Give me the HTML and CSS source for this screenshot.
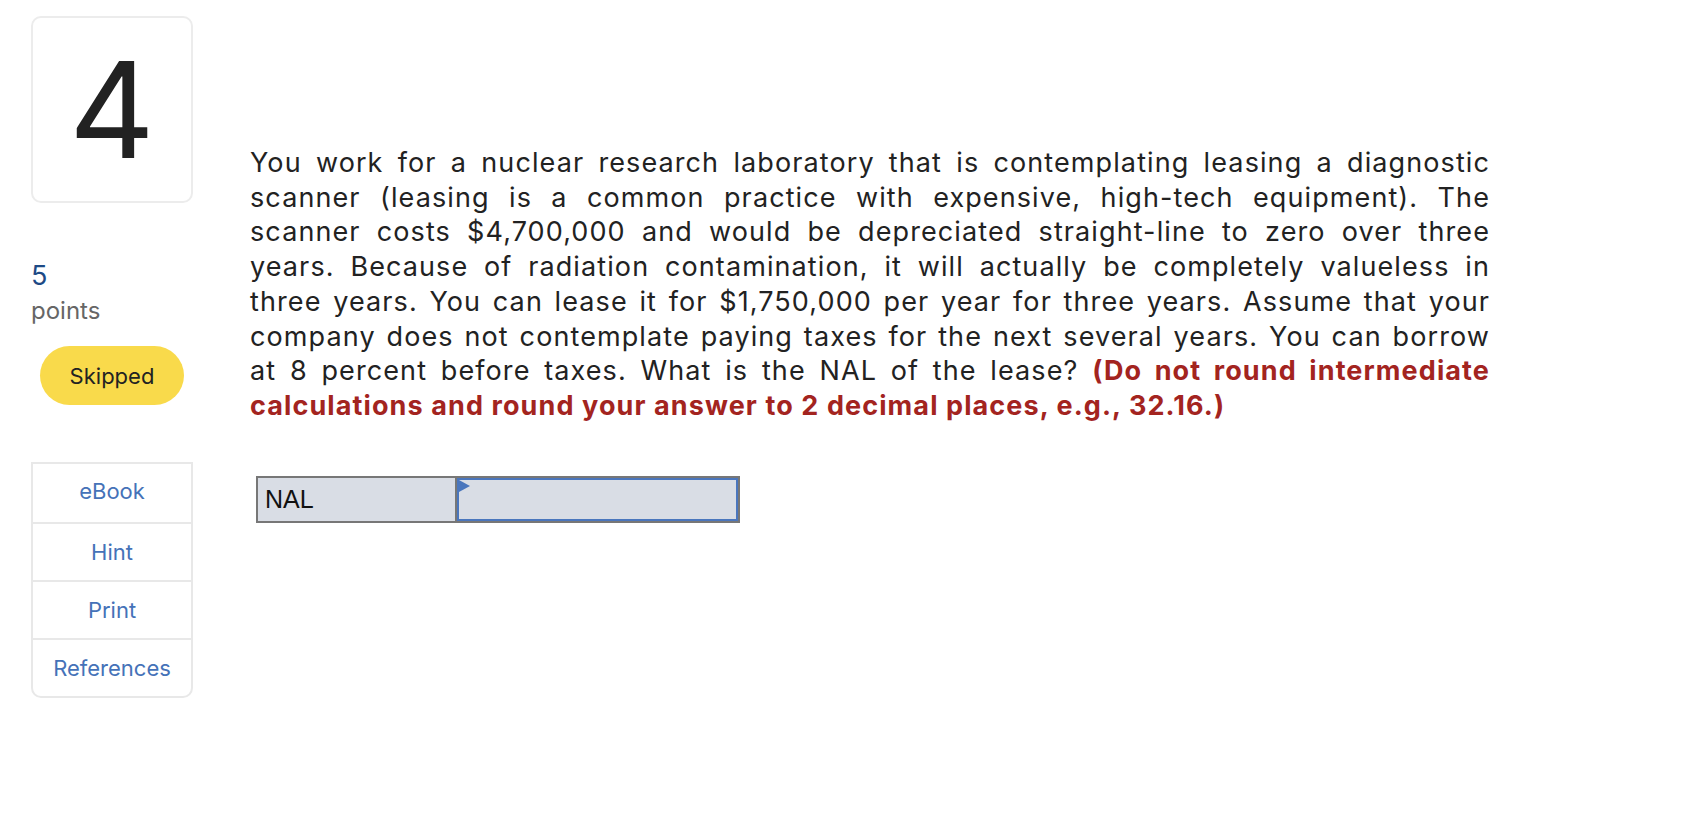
FILE: index.html
```html
<!DOCTYPE html>
<html lang="en">
<head>
<meta charset="utf-8">
<title>Question 4</title>
<link rel="stylesheet" href="styles.css">
</head>
<body>
<div class="page">
  <aside class="side">
    <div class="qnum">4</div>
    <div class="points">
      <div class="pts-val">5</div>
      <div class="pts-label">points</div>
    </div>
    <div class="status">Skipped</div>
    <ul class="tools">
      <li>eBook</li>
      <li>Hint</li>
      <li>Print</li>
      <li>References</li>
    </ul>
  </aside>
  <main class="question">
    <p class="prompt">
      <span class="ln">You work for a nuclear research laboratory that is contemplating leasing a diagnostic</span>
      <span class="ln">scanner (leasing is a common practice with expensive, high-tech equipment). The</span>
      <span class="ln">scanner costs $4,700,000 and would be depreciated straight-line to zero over three</span>
      <span class="ln">years. Because of radiation contamination, it will actually be completely valueless in</span>
      <span class="ln">three years. You can lease it for $1,750,000 per year for three years. Assume that your</span>
      <span class="ln">company does not contemplate paying taxes for the next several years. You can borrow</span>
      <span class="ln">at 8 percent before taxes. What is the NAL of the lease? <strong class="note">(Do not round intermediate</strong></span>
      <span class="ln last"><strong class="note">calculations and round your answer to 2 decimal places, e.g., 32.16.)</strong></span>
    </p>
    <div class="answer">
      <div class="label">NAL</div>
      <div class="input"></div>
    </div>
  </main>
</div>
</body>
</html>
```
FILE: styles.css
```css
html, body {
  margin: 0;
  padding: 0;
  background: #ffffff;
}

body {
  font-family: Inter, "Noto Sans", sans-serif;
  color: #222222;
}

.page {
  display: flex;
  align-items: flex-start;
}

.side {
  width: 162px;
  margin-left: 31px;
  padding-top: 16px;
  display: flex;
  flex-direction: column;
}

.qnum {
  height: 187px;
  box-sizing: border-box;
  border: 2px solid #ececec;
  border-radius: 10px;
  display: flex;
  align-items: center;
  justify-content: center;
  font-size: 133px;
  line-height: 1;
  font-weight: 400;
  color: #222222;
}

.points {
  margin-top: 57px;
}

.pts-val {
  font-size: 27px;
  line-height: 32px;
  color: #1d4a86;
}

.pts-label {
  margin-top: 4px;
  font-size: 24px;
  line-height: 30px;
  color: #666666;
}

.status {
  margin-top: 20px;
  margin-left: 9px;
  width: 144px;
  height: 59px;
  border-radius: 30px;
  background: #f9da4b;
  display: flex;
  align-items: center;
  justify-content: center;
  font-size: 22px;
  color: #222222;
}

.tools {
  list-style: none;
  margin: 57px 0 0 0;
  padding: 0;
  border: 2px solid #e8e8e8;
  border-radius: 0 0 10px 10px;
}

.tools li {
  height: 56px;
  display: flex;
  align-items: center;
  justify-content: center;
  font-size: 22px;
  color: #4572b8;
}

.tools li:first-child {
  height: 58px;
  padding-bottom: 4px;
  box-sizing: border-box;
}

.tools li + li {
  border-top: 2px solid #e8e8e8;
}

.question {
  margin-left: 57px;
  padding-top: 146px;
  width: 1240px;
}

.prompt {
  margin: 0;
  font-size: 27px;
  line-height: 34.7px;
  letter-spacing: 1.1px;
  color: #222222;
}

.ln {
  display: block;
  text-align: justify;
  text-align-last: justify;
}

.ln.last {
  text-align-last: left;
}

.note {
  color: #a3241f;
  font-weight: 700;
}

.answer {
  margin-top: 52px;
  margin-left: 6px;
  width: 484px;
  height: 47px;
  box-sizing: border-box;
  border: 2px solid #777777;
  background: #d9dde5;
  display: flex;
}

.label {
  box-sizing: border-box;
  width: 199px;
  border-right: 2px solid #777777;
  padding-left: 7px;
  display: flex;
  align-items: center;
  font-family: "Liberation Sans", Arial, sans-serif;
  font-size: 25px;
  color: #111111;
}

.input {
  flex: 1;
  position: relative;
  border: 2px solid #4a76bd;
}

.input::before {
  content: "";
  position: absolute;
  left: 0;
  top: 0;
  border-style: solid;
  border-width: 6px 0 6px 11px;
  border-color: transparent transparent transparent #4a76bd;
}
```
